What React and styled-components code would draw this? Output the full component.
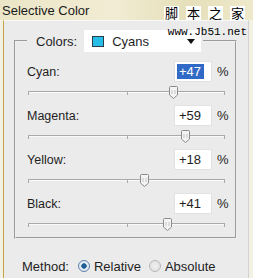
import React from "react";
import styled, { createGlobalStyle } from "styled-components";

const Global = createGlobalStyle`
  html, body { margin: 0; padding: 0; background: #efebdf; }
  body { font-family: "Liberation Sans", Arial, sans-serif; font-size: 12px; color: #1e1e1e; }
`;

const Root = styled.div`
  position: relative;
  width: 253px;
  height: 278px;
  overflow: hidden;
  display: flex;
  flex-direction: column;
  background: #efebdf;
`;

const TitleBar = styled.div`
  height: 20px;
  flex: none;
  display: flex;
  align-items: center;
  padding-left: 2px;
  background: linear-gradient(90deg, #ece6c8 0%, #f1ecd3 45%, #e6dfba 75%, #efe9cc 100%);
  font-size: 13px;
  color: #1a1a1a;
`;

const Frame = styled.div`
  flex: 1;
  display: flex;
  padding: 0 4px 0 3px;
  background: #f3f0e4;
`;

const Panel = styled.div`
  flex: 1;
  display: flex;
  flex-direction: column;
  background: #ebebeb;
  border-left: 1px solid #c7a24c;
  border-right: 1px solid #d2d2d2;
  border-top: 1px solid #f8f8f8;
  padding: 9px 0 0 10px;
`;

const Group = styled.fieldset`
  margin: 0;
  width: 223px;
  box-sizing: border-box;
  border: 2px groove #efefef;
  padding: 9px 6px 0 11px;
  display: flex;
  flex-direction: column;
`;

const Legend = styled.legend`
  display: flex;
  align-items: center;
  padding: 0 2px 0 9px;
  gap: 7px;
  font-size: 13px;
`;

const Dropdown = styled.div`
  width: 117px;
  height: 22px;
  box-sizing: border-box;
  background: #fff;
  display: flex;
  align-items: center;
  padding: 0 6px 0 8px;
  gap: 8px;
`;

const Swatch = styled.span`
  width: 12px;
  height: 11px;
  box-sizing: border-box;
  border: 1px solid #2a3d48;
  background: ${(p) => p.$color};
`;

const DropText = styled.span`
  flex: 1;
  font-size: 13px;
`;

const Arrow = styled.span`
  width: 0;
  height: 0;
  border-left: 4px solid transparent;
  border-right: 4px solid transparent;
  border-top: 5px solid #111;
  margin-top: 1px;
`;

const Row = styled.div`
  display: flex;
  flex-direction: column;
  margin-bottom: 5px;
`;

const Header = styled.div`
  display: flex;
  align-items: center;
  height: 21px;
`;

const Label = styled.span`
  flex: 1;
  font-size: 12.5px;
`;

const Input = styled.div`
  width: 38px;
  height: 21px;
  box-sizing: border-box;
  background: #fff;
  border: 1px solid #e2e2e2;
  display: flex;
  align-items: center;
  padding-left: 2px;
  font-size: 13px;
`;

const Value = styled.span`
  padding: 0 3px 0 2px;
  line-height: 15px;
  background: ${(p) => (p.$selected ? "#3169c6" : "transparent")};
  color: ${(p) => (p.$selected ? "#fff" : "#1e1e1e")};
`;

const Percent = styled.span`
  width: 12px;
  margin-left: 5px;
  font-size: 13px;
`;

const Slider = styled.div`
  position: relative;
  height: 16px;
  margin: 2px 4px 0 1px;
`;

const Track = styled.div`
  position: absolute;
  left: 0;
  right: 0;
  top: 7px;
  height: 1px;
  background: #a9a9a9;
  box-shadow: 0 1px 0 #fafafa;
`;

const Tick = styled.div`
  position: absolute;
  top: 7px;
  width: 1px;
  height: 4px;
  background: #a9a9a9;
  left: ${(p) => p.$at};
`;

const Thumb = styled.svg`
  position: absolute;
  top: 2px;
  width: 9px;
  height: 13px;
  margin-left: -4px;
`;

const MethodRow = styled.div`
  display: flex;
  align-items: center;
  margin: 19px 0 0 8px;
  height: 16px;
  font-size: 13px;
`;

const MethodLabel = styled.span`
  margin-right: 9px;
`;

const RadioItem = styled.label`
  display: flex;
  align-items: center;
  gap: 4px;
  margin-right: 8px;
`;

const RadioCircle = styled.span`
  width: 12px;
  height: 12px;
  box-sizing: border-box;
  border-radius: 50%;
  border: 1px solid ${(p) => (p.$checked ? "#5a7ea8" : "#b8b8b8")};
  background: ${(p) =>
    p.$checked
      ? "radial-gradient(circle, #1f5f96 0 2.4px, #dfe9f2 3px, #f4f4f4 100%)"
      : "radial-gradient(circle, #f0f0f0 0, #dcdcdc 100%)"};
`;

const Watermark = styled.div`
  position: absolute;
  top: 6px;
  right: 8px;
  display: flex;
  flex-direction: column;
  align-items: flex-end;
`;

const WmChars = styled.div`
  display: flex;
  gap: 7px;
`;

const WmChar = styled.span`
  background: #fff;
  font-family: "Noto Sans CJK SC", sans-serif;
  font-size: 13px;
  line-height: 14px;
  padding: 0 1px;
  color: #000;
`;

const WmUrl = styled.span`
  font-family: "Liberation Mono", "DejaVu Sans Mono", monospace;
  font-size: 11px;
  line-height: 11px;
  color: #000;
  margin-top: 7px;
  margin-right: -2px;
`;

const rows = [
  { label: "Cyan:", value: 47, selected: true },
  { label: "Magenta:", value: 59 },
  { label: "Yellow:", value: 18 },
  { label: "Black:", value: 41 },
];

function SliderThumb({ pos }) {
  return (
    <Thumb style={{ left: pos }} viewBox="0 0 9 13">
      <path
        d="M1.5 0.5 H7.5 Q8.5 0.5 8.5 1.5 V9 L4.5 12.5 L0.5 9 V1.5 Q0.5 0.5 1.5 0.5 Z"
        fill="#f4f4f4"
        stroke="#8a8a8a"
        strokeWidth="1"
      />
      <path d="M3 4 V8 M6 4 V8" stroke="#c4c4c4" strokeWidth="1" />
    </Thumb>
  );
}

export default function App() {
  return (
    <>
      <Global />
      <Root>
        <TitleBar>Selective Color</TitleBar>
        <Frame>
          <Panel>
            <Group>
              <Legend>
                <span>Colors:</span>
                <Dropdown>
                  <Swatch $color="#26bde6" />
                  <DropText>Cyans</DropText>
                  <Arrow />
                </Dropdown>
              </Legend>
              {rows.map((r) => (
                <Row key={r.label}>
                  <Header>
                    <Label>{r.label}</Label>
                    <Input>
                      <Value $selected={r.selected}>+{r.value}</Value>
                    </Input>
                    <Percent>%</Percent>
                  </Header>
                  <Slider>
                    <Track />
                    <Tick $at="0" />
                    <Tick $at="50%" />
                    <Tick $at="calc(100% - 1px)" />
                    <SliderThumb pos={`${50 + r.value / 2}%`} />
                  </Slider>
                </Row>
              ))}
            </Group>
            <MethodRow>
              <MethodLabel>Method:</MethodLabel>
              <RadioItem>
                <RadioCircle $checked />
                Relative
              </RadioItem>
              <RadioItem>
                <RadioCircle />
                Absolute
              </RadioItem>
            </MethodRow>
          </Panel>
        </Frame>
        <Watermark>
          <WmChars>
            <WmChar>脚</WmChar>
            <WmChar>本</WmChar>
            <WmChar>之</WmChar>
            <WmChar>家</WmChar>
          </WmChars>
          <WmUrl>www.Jb51.net</WmUrl>
        </Watermark>
      </Root>
    </>
  );
}
